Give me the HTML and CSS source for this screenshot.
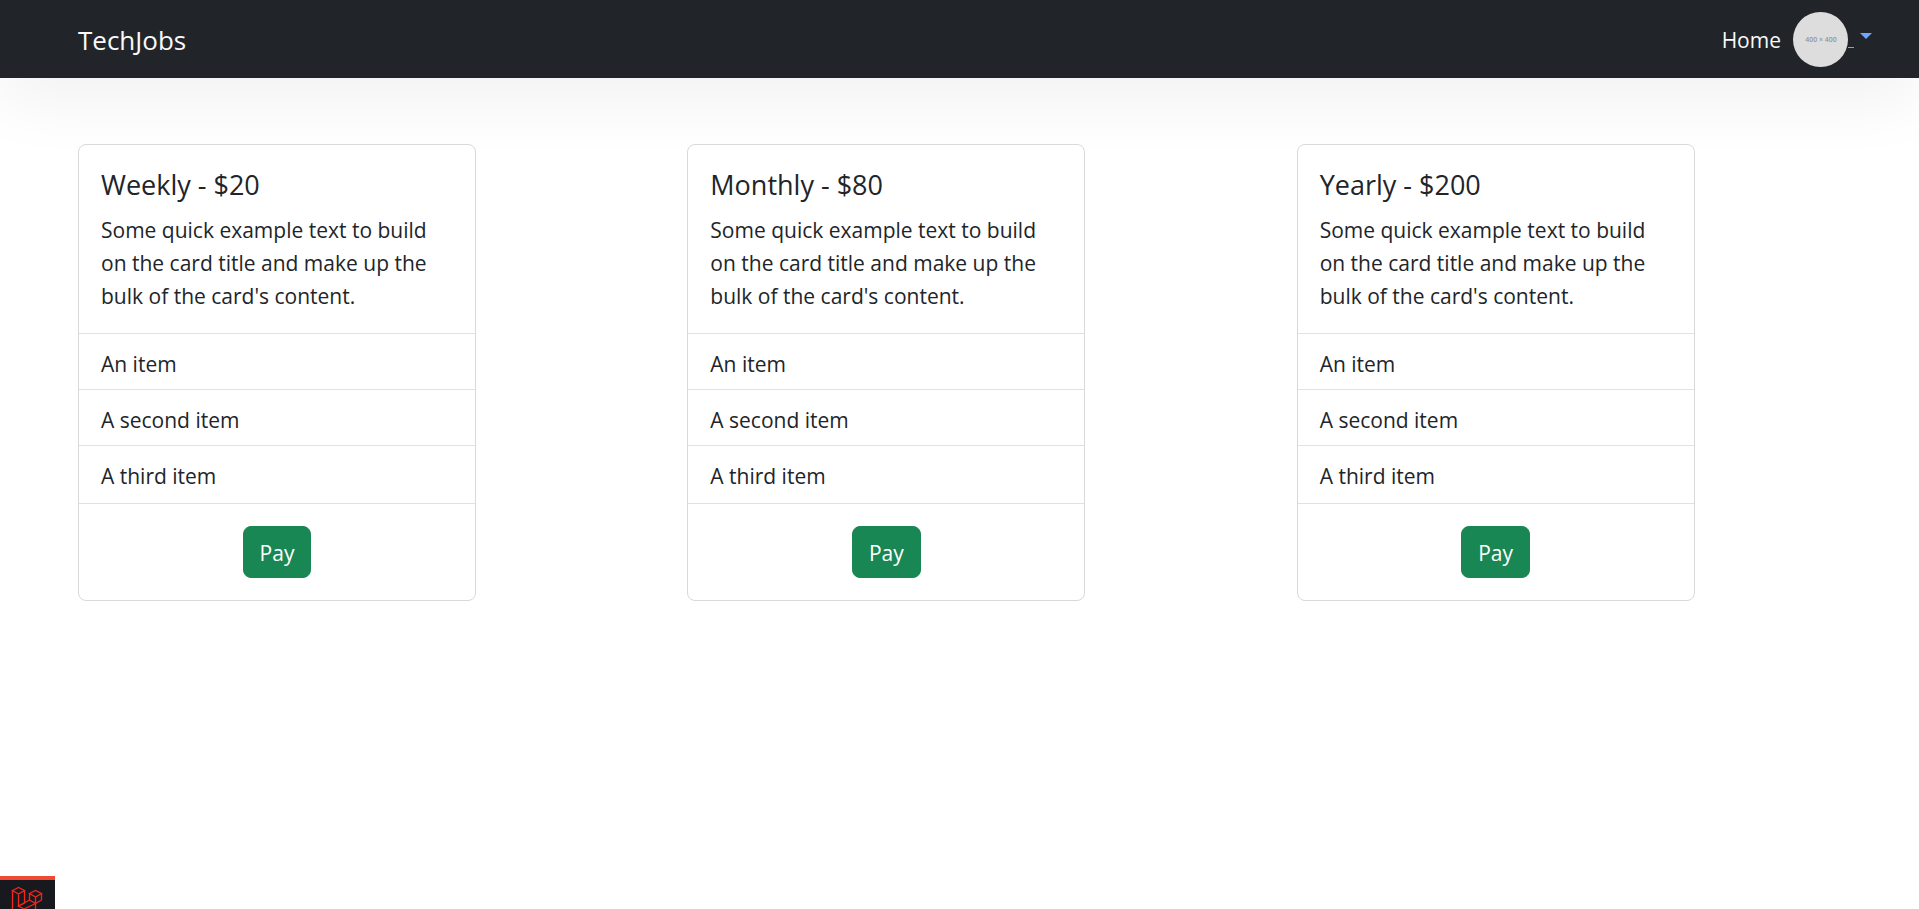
FILE: index.html
```html
<!DOCTYPE html>
<html lang="en">
<head>
<meta charset="utf-8">
<title>TechJobs</title>
<link rel="stylesheet" href="styles.css">
</head>
<body>
<header class="navbar">
  <a class="brand" href="#">TechJobs</a>
  <nav class="nav">
    <a class="nav-link" href="#">Home</a>
    <a class="profile" href="#" aria-label="Account menu">
      <svg class="avatar" viewBox="0 0 55 55" aria-hidden="true">
        <rect width="55" height="55" fill="#dddddd"/>
        <text class="avatar-text" x="28" y="30" text-anchor="middle">400 × 400</text>
      </svg>
      <span class="profile-space"></span>
      <span class="caret"></span>
    </a>
  </nav>
</header>
<main class="plans">
  <article class="card">
    <div class="card-body">
      <h5 class="card-title">Weekly - $20</h5>
      <p class="card-text">Some quick example text to build on the card title and make up the bulk of the card's content.</p>
    </div>
    <ul class="list">
      <li class="list-item">An item</li>
      <li class="list-item">A second item</li>
      <li class="list-item">A third item</li>
    </ul>
    <div class="card-action"><button class="btn" type="button">Pay</button></div>
  </article>
  <article class="card">
    <div class="card-body">
      <h5 class="card-title">Monthly - $80</h5>
      <p class="card-text">Some quick example text to build on the card title and make up the bulk of the card's content.</p>
    </div>
    <ul class="list">
      <li class="list-item">An item</li>
      <li class="list-item">A second item</li>
      <li class="list-item">A third item</li>
    </ul>
    <div class="card-action"><button class="btn" type="button">Pay</button></div>
  </article>
  <article class="card">
    <div class="card-body">
      <h5 class="card-title">Yearly - $200</h5>
      <p class="card-text">Some quick example text to build on the card title and make up the bulk of the card's content.</p>
    </div>
    <ul class="list">
      <li class="list-item">An item</li>
      <li class="list-item">A second item</li>
      <li class="list-item">A third item</li>
    </ul>
    <div class="card-action"><button class="btn" type="button">Pay</button></div>
  </article>
</main>
<button class="debugbar" type="button" aria-label="Open debug bar">
  <svg class="debugbar-logo" viewBox="0 0 55 29" aria-hidden="true">
    <path d="M12.500 10.500L18.500 7.500l6 3-6 3.500zM12.500 10.500V34M18.500 14v12L24.500 23V10.500M29.500 13.500L35.500 10.500l6 3-6 3.500zM29.500 13.500v6.500l6 3.500 6-3.500v-6.500M35.500 17v13M29.500 20L18.500 26l5.500 3 11.500-5.500"/>
  </svg>
</button>
</body>
</html>
```
FILE: styles.css
```css
* { box-sizing: border-box; }

body {
  margin: 0;
  min-height: 100vh;
  background: #fff;
  color: #212529;
  font-family: "Segoe UI", "Open Sans", sans-serif;
  font-size: 21px;
  line-height: 33px;
}

.navbar {
  display: flex;
  align-items: center;
  justify-content: space-between;
  height: 78px;
  padding: 0 47px 0 78px;
  background: #212529;
  box-shadow: 0 22px 66px rgba(0, 0, 0, 0.06);
}

.brand,
.nav-link {
  padding-top: 2px;
  color: #f8f9fa;
  text-decoration: none;
}

.brand { font-size: 26px; }

.nav {
  display: flex;
  align-items: center;
  gap: 12px;
}

.profile {
  display: flex;
  align-items: center;
  color: #6ea8fe;
  text-decoration: none;
}

.avatar {
  width: 55px;
  height: 55px;
  border-radius: 50%;
}

.avatar-text {
  fill: #969696;
  font-size: 7px;
  font-weight: 600;
}

.profile-space {
  width: 6px;
  height: 18px;
  border-bottom: 1px solid #6ea8fe;
}

.caret {
  margin: 0 0 6px 6px;
  border: 6px solid transparent;
  border-top-color: #6ea8fe;
  border-bottom: 0;
}

.plans {
  position: relative;
  display: grid;
  grid-template-columns: repeat(3, 1fr);
  padding: 66px 13px 66px 78px;
}

.card {
  width: 398px;
  max-width: 100%;
  border: 1px solid #d9d9d9;
  border-radius: 8px;
  background: #fff;
}

.card-body { padding: 23px 22px 20px; }

.card-title {
  margin: 0 0 13px;
  font-size: 27px;
  font-weight: 400;
  line-height: 33px;
}

.card-text { margin: 0; }

.list {
  margin: 0;
  padding: 0 0 2px;
  border: solid #dee2e6;
  border-width: 1px 0;
  list-style: none;
}

.list-item { padding: 14px 22px 8px; }

.list-item + .list-item { border-top: 1px solid #dee2e6; }

.card-action {
  display: flex;
  justify-content: center;
  padding: 22px;
}

.btn {
  padding: 10px 16px 7px;
  border: 1px solid #198754;
  border-radius: 8px;
  background: #198754;
  color: #fff;
  font: inherit;
}

.debugbar {
  position: fixed;
  bottom: 0;
  left: 0;
  width: 55px;
  height: 33px;
  padding: 0;
  border: 0;
  border-top: 4px solid #f04a35;
  background: #18181f;
}

.debugbar-logo {
  display: block;
  width: 55px;
  height: 29px;
  fill: none;
  stroke: #f0281e;
  stroke-width: 1.3;
}
```
